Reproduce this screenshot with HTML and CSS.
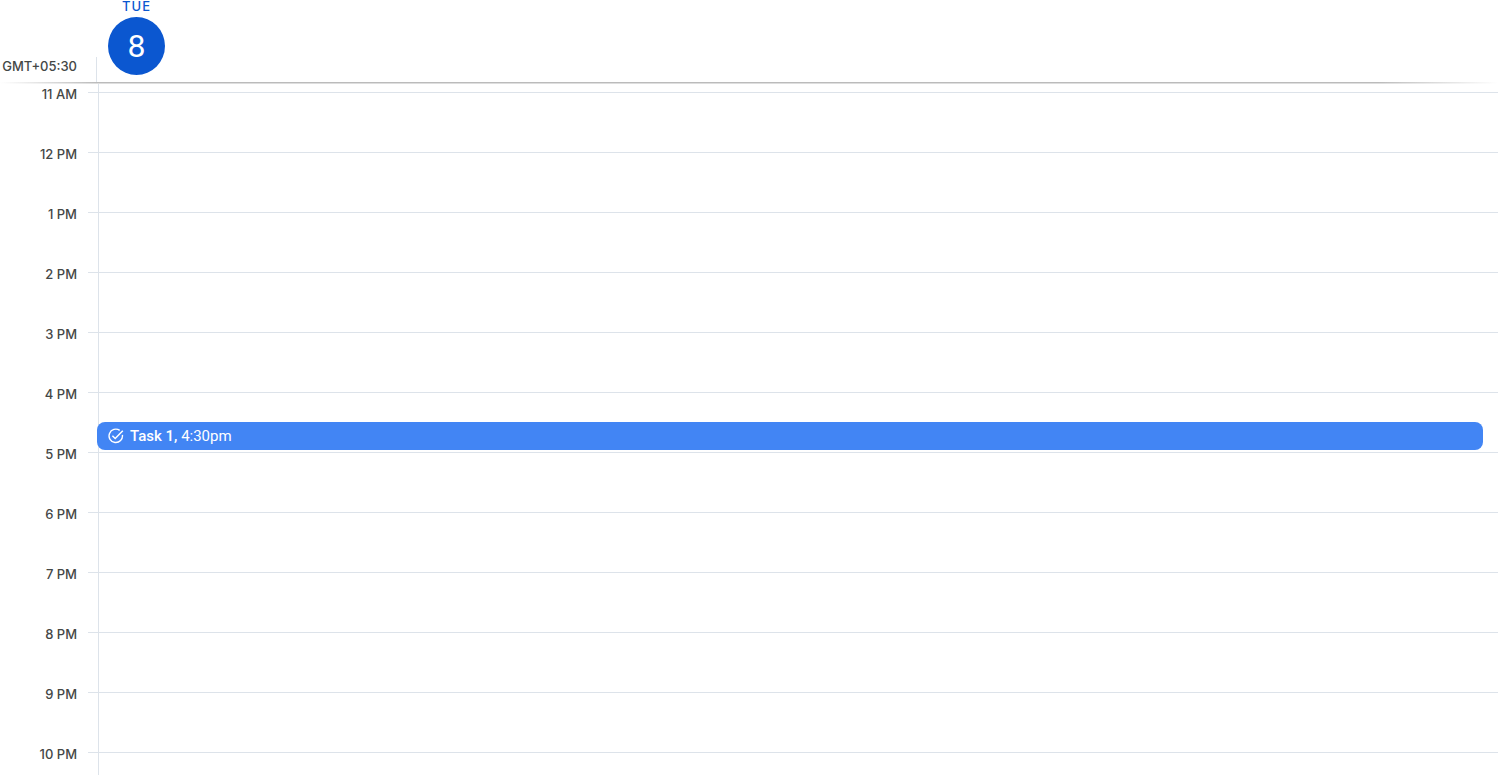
FILE: index.html
```html
<!DOCTYPE html>
<html lang="en">
<head>
<meta charset="utf-8">
<title>Calendar – Tuesday 8</title>
<link rel="stylesheet" href="styles.css">
</head>
<body>
<header class="day-header">
  <div class="timezone">GMT+05:30</div>
  <div class="header-divider"></div>
  <h2 class="day">
    <span class="weekday">TUE</span>
    <button class="date" type="button">8</button>
  </h2>
</header>
<main class="schedule">
  <div class="hours">
    <div class="hour">11 AM</div>
    <div class="hour">12 PM</div>
    <div class="hour">1 PM</div>
    <div class="hour">2 PM</div>
    <div class="hour">3 PM</div>
    <div class="hour">4 PM</div>
    <div class="hour">5 PM</div>
    <div class="hour">6 PM</div>
    <div class="hour">7 PM</div>
    <div class="hour">8 PM</div>
    <div class="hour">9 PM</div>
    <div class="hour">10 PM</div>
  </div>
  <div class="ticks">
    <div class="slot slot-first"></div>
    <div class="slot"></div><div class="slot"></div><div class="slot"></div><div class="slot"></div>
    <div class="slot"></div><div class="slot"></div><div class="slot"></div><div class="slot"></div>
    <div class="slot"></div><div class="slot"></div><div class="slot"></div>
  </div>
  <div class="day-column">
    <div class="slot slot-first"></div>
    <div class="slot"></div><div class="slot"></div><div class="slot"></div><div class="slot"></div>
    <div class="slot"></div><div class="slot"></div><div class="slot"></div><div class="slot"></div>
    <div class="slot"></div><div class="slot"></div><div class="slot"></div>
    <button class="event" type="button">
      <svg class="event-icon" viewBox="0 0 16 16" width="16" height="16" aria-hidden="true">
        <path d="M11.7 2.4A6.7 6.7 0 1 0 14.4 6.9" fill="none" stroke="currentColor" stroke-width="1.4"/>
        <path d="M4.4 7.7L7.2 10.5L14.8 2.7" fill="none" stroke="currentColor" stroke-width="1.5"/>
      </svg>
      <span><span class="event-title">Task 1,</span> 4:30pm</span>
    </button>
  </div>
</main>
</body>
</html>
```
FILE: styles.css
```css
* {
  box-sizing: border-box;
}

body {
  display: flex;
  flex-direction: column;
  height: 100vh;
  margin: 0;
  overflow: hidden;
  background: #fff;
  color: #444746;
  font-family: Inter, Roboto, sans-serif;
  font-size: 13px;
  line-height: 20px;
}

.day-header {
  display: flex;
  flex: none;
  align-items: flex-end;
  padding-bottom: 2px;
  background: linear-gradient(to right, #fff, #bbb 96px, #bbb calc(100% - 120px), #fff) bottom 1px left / 100% 1px no-repeat,
    linear-gradient(to right, #fff, #dedede 96px, #dedede calc(100% - 120px), #fff) bottom left / 100% 1px no-repeat;
}

.timezone {
  width: 96px;
  padding: 0 19px 6px 0;
  font-weight: 500;
  text-align: right;
  white-space: nowrap;
}

.header-divider {
  width: 1px;
  height: 25px;
  background: #dde3ea;
}

.day {
  display: flex;
  flex-direction: column;
  align-items: center;
  margin: 0 0 7px 11px;
  color: #0b57d0;
  font-size: 13px;
  font-weight: 500;
}

.weekday {
  line-height: 12px;
  letter-spacing: 1px;
}

.date {
  width: 57px;
  height: 58px;
  margin-top: 5px;
  padding: 0;
  border: 0;
  border-radius: 50%;
  background: #0b57d0;
  color: #fff;
  font: 32px/56px Roboto, "Liberation Sans", sans-serif;
}

.schedule {
  display: flex;
  flex: 1;
  min-height: 0;
}

.hours {
  width: 88px;
  padding-right: 11px;
  font-weight: 500;
  text-align: right;
}

.hour {
  height: 60px;
}

.ticks {
  width: 10px;
}

.day-column {
  position: relative;
  flex: 1;
  border-left: 1px solid #dde3ea;
}

.slot {
  height: 60px;
  border-bottom: 1px solid #dde3ea;
}

.slot-first {
  height: 9px;
}

.event {
  position: absolute;
  top: 338px;
  right: 15px;
  left: -2px;
  display: flex;
  gap: 6px;
  align-items: center;
  height: 28px;
  padding: 0 11px;
  border: 0;
  border-radius: 8px;
  background: #4285f4;
  color: #fff;
  font: 15px/20px Roboto, "Liberation Sans", sans-serif;
}

.event-icon {
  flex: none;
}

.event-title {
  font-weight: 500;
}
```
